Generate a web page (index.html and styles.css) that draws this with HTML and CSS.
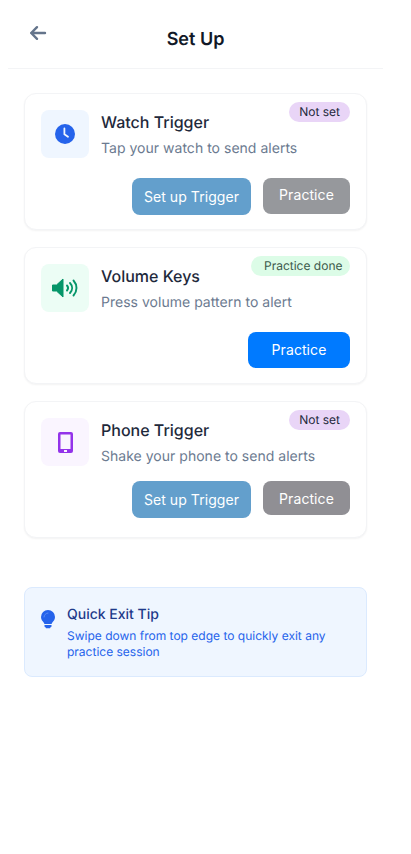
FILE: index.html
```html
<!DOCTYPE html>
<html lang="en">
<head>
<meta charset="utf-8">
<title>Set Up</title>
<link rel="stylesheet" href="styles.css">
</head>
<body>
<main class="page">
  <header class="header">
    <button class="back" aria-label="Back">
      <svg width="20" height="20" viewBox="0 0 20 20" fill="none" stroke="#64748b" stroke-width="2.400" stroke-linecap="round" stroke-linejoin="round"><path d="M17 10H3.200M9 4.200 3.200 10 9 15.800"/></svg>
    </button>
    <h1 class="title">Set Up</h1>
  </header>

  <section class="list">
    <article class="card">
      <span class="badge badge-unset">Not set</span>
      <div class="info">
        <div class="tile tile-blue">
          <svg width="20" height="20" viewBox="0 0 20 20"><circle cx="10" cy="10" r="10" fill="#2563eb"/><path d="M9.400 4.500v5.800l3.600 2.500" fill="none" stroke="#eff6ff" stroke-width="1.800" stroke-linecap="round" stroke-linejoin="round"/></svg>
        </div>
        <div class="text">
          <h2 class="name">Watch Trigger</h2>
          <p class="desc">Tap your watch to send alerts</p>
        </div>
      </div>
      <div class="actions">
        <button class="btn btn-setup">Set up Trigger</button>
        <button class="btn btn-muted">Practice</button>
      </div>
    </article>

    <article class="card">
      <span class="badge badge-done">Practice done</span>
      <div class="info">
        <div class="tile tile-green">
          <svg width="26" height="20" viewBox="0 0 26 20"><path d="M.5 7h4L11 1v18l-6.500-6H.5z" fill="#059669" stroke="#059669" stroke-width="1" stroke-linejoin="round"/><path d="M15 7.500c1.400 1.600 1.400 3.400 0 5M18 5c2.800 3 2.800 7 0 10M21.500 2.500c4 4.500 4 10.500 0 15" fill="none" stroke="#059669" stroke-width="1.900" stroke-linecap="round"/></svg>
        </div>
        <div class="text">
          <h2 class="name">Volume Keys</h2>
          <p class="desc">Press volume pattern to alert</p>
        </div>
      </div>
      <div class="actions">
        <button class="btn btn-primary">Practice</button>
      </div>
    </article>

    <article class="card">
      <span class="badge badge-unset">Not set</span>
      <div class="info">
        <div class="tile tile-purple">
          <svg width="15" height="21" viewBox="0 0 15 21"><path fill-rule="evenodd" d="M2 0h11a2 2 0 0 1 2 2v17a2 2 0 0 1-2 2H2a2 2 0 0 1-2-2V2a2 2 0 0 1 2-2zM2.500 2.500V17h10V2.500zM6 18v2h3v-2z" fill="#9333ea"/></svg>
        </div>
        <div class="text">
          <h2 class="name">Phone Trigger</h2>
          <p class="desc">Shake your phone to send alerts</p>
        </div>
      </div>
      <div class="actions actions-tight">
        <button class="btn btn-setup">Set up Trigger</button>
        <button class="btn btn-muted btn-muted-alt">Practice</button>
      </div>
    </article>
  </section>

  <aside class="tip">
    <svg class="tip-icon" width="14" height="19" viewBox="0 0 14 19"><path fill-rule="evenodd" d="M7 0a7 7 0 0 1 7 7c0 2.600-1.500 4-2.500 5.300-.5.7-.8 1.200-.9 1.700H3.400c-.1-.5-.4-1-.9-1.700C1.500 11 0 9.600 0 7a7 7 0 0 1 7-7z" fill="#2563eb"/><path d="M3.500 15h7v1.200a1 1 0 0 1-1 1l-.5 1H5l-.5-1a1 1 0 0 1-1-1z" fill="#2563eb"/><path d="M3 7a4 4 0 0 1 4-4" fill="none" stroke="#5c8cf2" stroke-width="1" stroke-linecap="round"/></svg>
    <div>
      <h3 class="tip-title">Quick Exit Tip</h3>
      <p class="tip-text">Swipe down from top edge to quickly exit any practice session</p>
    </div>
  </aside>
</main>
</body>
</html>
```
FILE: styles.css
```css
* { box-sizing: border-box; }
html, body { background: #fff; }
body { margin: 8px; font-family: Inter, "Liberation Sans", sans-serif; color: #111827; text-rendering: geometricPrecision; }
.page { width: 375px; }
.header { position: relative; height: 61px; border-bottom: 1px solid #f3f4f6; display: flex; justify-content: center; padding-top: 20px; }
.back { position: absolute; left: 20px; top: 15px; width: 20px; height: 20px; padding: 0; border: 0; background: none; display: flex; }
.title { margin: 0; font-size: 18px; line-height: 24px; font-weight: 600; color: #111827; }
.list { display: flex; flex-direction: column; gap: 17px; padding: 24px 16px 0; }
.card { position: relative; height: 137px; padding: 16px; background: #fff; border: 1px solid #f3f4f6; border-radius: 12px; box-shadow: 0 1px 2px rgba(0,0,0,.05); }
.badge { position: absolute; top: 8px; right: 16px; height: 20px; padding: 0 10px; border-radius: 10px; font-size: 12px; line-height: 20px; color: #1e293b; }
.badge-unset { background: #e9d5f7; }
.badge-done { width: 99px; padding: 0 6px 0 13px; background: #dcfce7; color: #3d5a4c; }
.info { display: flex; gap: 12px; }
.tile { flex: none; width: 48px; height: 48px; border-radius: 8px; display: flex; align-items: center; justify-content: center; }
.tile-blue { background: #eff6ff; }
.tile-green { background: #ecfdf5; }
.tile-purple { background: #faf5ff; }
.name { margin: 0 0 5px; font-size: 16px; line-height: 24px; font-weight: 500; color: #1e293b; }
.desc { margin: 0; font-size: 14px; line-height: 20px; letter-spacing: .02px; color: #6b7a90; }
.actions { display: flex; justify-content: flex-end; align-items: flex-start; gap: 12px; margin-top: 19px; }
.actions-tight { margin-top: 14px; }
.btn { height: 37px; padding: 0; border: 0; border-radius: 8px; font: 400 14px/20px Inter, "Liberation Sans", sans-serif; letter-spacing: .07px; color: #fff; }
.btn-setup { width: 119px; background: #639fcc; }
.btn-muted { width: 87px; height: 36px; padding-bottom: 2px; background: #96989c; }
.btn-muted-alt { height: 34px; padding: 2px 0 0; background: #908f94; }
.btn-primary { width: 102px; height: 36px; background: #007aff; }
.tip { display: flex; gap: 12px; margin: 49px 16px 0; height: 90px; padding: 17px 16px; background: #eff6ff; border: 1px solid #dbeafe; border-radius: 8px; }
.tip-icon { flex: none; margin-top: 5px; }
.tip-title { margin: 0 0 3px; font-size: 14px; line-height: 20px; font-weight: 500; color: #1e3a8a; }
.tip-text { margin: 0; font-size: 12px; line-height: 16px; color: #2563eb; }
```
